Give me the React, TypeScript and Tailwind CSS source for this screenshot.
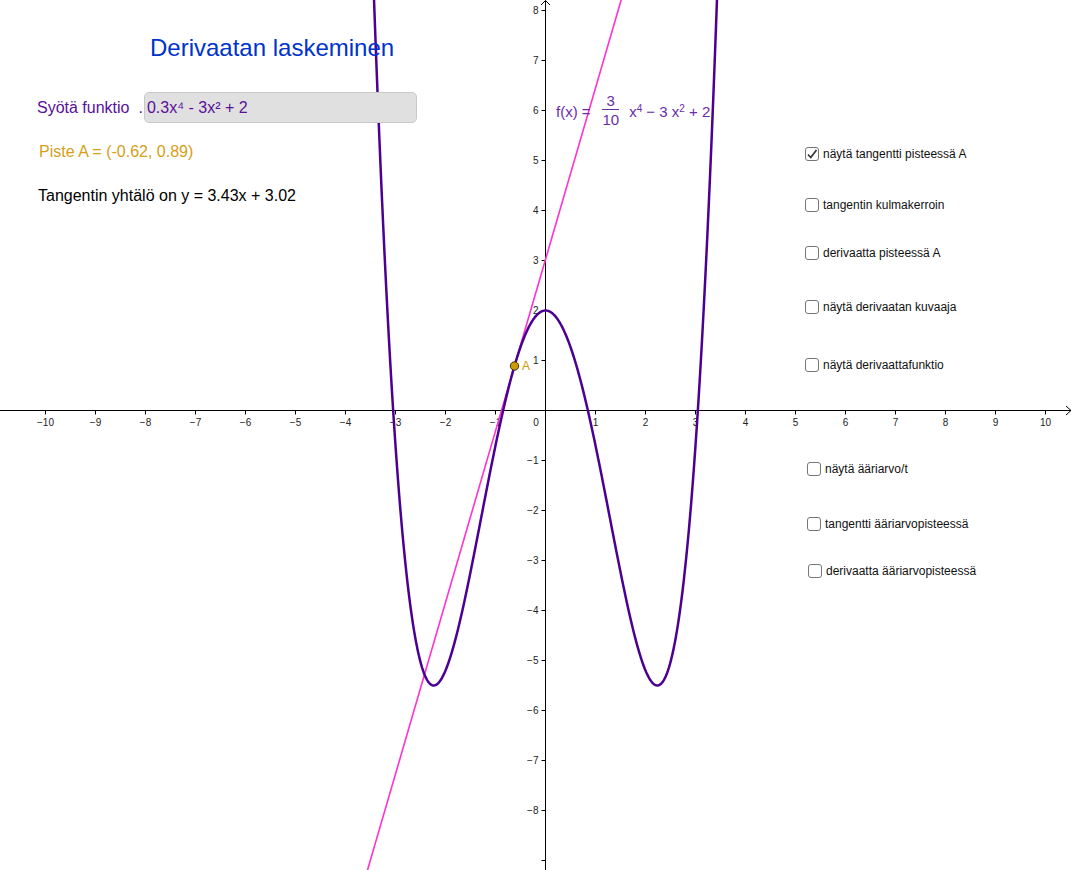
import React from "react";

// graph coordinates: origin in px, 50px per unit
const OX = 545.5;
const OY = 410.5;
const U = 50;

const f = (x: number) => 0.3 * x ** 4 - 3 * x ** 2 + 2;

const curvePoints = () => {
  const pts: string[] = [];
  for (let px = 360; px <= 732; px += 1) {
    const x = (px - OX) / U;
    const py = OY - f(x) * U;
    if (py < -40) continue;
    pts.push(`${px},${py.toFixed(2)}`);
  }
  return pts.join(" ");
};

const minus = (n: number) => (n < 0 ? `\u2212${-n}` : `${n}`);

const topChecks = [
  { label: "näytä tangentti pisteessä A", cls: "", checked: true },
  { label: "tangentin kulmakerroin", cls: "mt-[37px]" },
  { label: "derivaatta pisteessä A", cls: "mt-[34px]" },
  { label: "näytä derivaatan kuvaaja", cls: "mt-[40px]" },
  { label: "näytä derivaattafunktio", cls: "mt-[44px]" },
];

const bottomChecks = [
  { label: "näytä ääriarvo/t", cls: "" },
  { label: "tangentti ääriarvopisteessä", cls: "mt-[41px] ml-[0px]" },
  { label: "derivaatta ääriarvopisteessä", cls: "mt-[33px] ml-[1px]" },
];

const Graph: React.FC = () => {
  const xs = Array.from({ length: 21 }, (_, i) => i - 10).filter((k) => k !== 0);
  const ys = Array.from({ length: 18 }, (_, i) => i - 9).filter((k) => k !== 0);

  // tangent y = 3.43x + 3.02
  const tx = (yv: number) => OX + ((yv - 3.02) / 3.43) * U;
  const yTop = OY / U;
  const yBot = (OY - 870) / U;

  return (
    <svg className="absolute inset-0" width={1074} height={870} viewBox="0 0 1074 870">
      {/* axes */}
      <line x1={0} y1={OY} x2={1071} y2={OY} stroke="#000" strokeWidth={1} />
      <polyline points="1066,406 1071,410.5 1066,415" fill="none" stroke="#000" strokeWidth={1} />
      <line x1={OX} y1={0.5} x2={OX} y2={870} stroke="#000" strokeWidth={1} />
      <polyline points="541,5 545.5,0.5 550,5" fill="none" stroke="#000" strokeWidth={1} />

      {xs.map((k) => (
        <g key={`x${k}`}>
          <line x1={OX + k * U} y1={OY} x2={OX + k * U} y2={OY + 4} stroke="#000" strokeWidth={1} />
          <text
            x={OX + k * U}
            y={OY + 15}
            textAnchor="middle"
            fontSize={10}
            fontFamily="'Liberation Sans', Arial, sans-serif"
            fill="#222"
          >
            {minus(k)}
          </text>
        </g>
      ))}
      <text x={536} y={OY + 15} textAnchor="middle" fontSize={10} fontFamily="'Liberation Sans', Arial, sans-serif" fill="#222">
        0
      </text>
      {ys.map((k) => (
        <g key={`y${k}`}>
          <line x1={OX - 4} y1={OY - k * U} x2={OX} y2={OY - k * U} stroke="#000" strokeWidth={1} />
          {k !== -9 && (
            <text
              x={538.5}
              y={OY - k * U + 3.5}
              textAnchor="end"
              fontSize={10}
              fontFamily="'Liberation Sans', Arial, sans-serif"
              fill="#222"
            >
              {minus(k)}
            </text>
          )}
        </g>
      ))}

      {/* tangent line */}
      <line x1={tx(yTop)} y1={0} x2={tx(yBot)} y2={870} stroke="#ff33cc" strokeWidth={1.6} />

      {/* function curve */}
      <polyline points={curvePoints()} fill="none" stroke="#4b0092" strokeWidth={2.5} strokeLinejoin="round" />

      {/* point A */}
      <circle cx={OX - 0.62 * U} cy={OY - 0.89 * U} r={4.2} fill="#cc9a06" stroke="#3a3000" strokeWidth={1} />
    </svg>
  );
};

const CheckRow: React.FC<{ label: string; checked?: boolean; cls: string }> = ({ label, checked, cls }) => (
  <div className={`flex items-center gap-[4px] ${cls}`}>
    <span className="flex h-[14px] w-[14px] items-center justify-center rounded-[3px] border border-[#767676] bg-white">
      {checked && (
        <svg width="12" height="12" viewBox="0 0 12 12">
          <polyline points="2,6.5 4.8,9.5 10.5,2" fill="none" stroke="#333" strokeWidth={1.7} />
        </svg>
      )}
    </span>
    <span className="text-[12px] leading-none text-[#111]">{label}</span>
  </div>
);

export default function App() {
  return (
    <div className="relative h-[870px] w-[1074px] overflow-hidden bg-white font-['Liberation_Sans',Arial,sans-serif]">
      <Graph />

      {/* header + inputs */}
      <div className="absolute left-[37px] top-[35.5px] flex flex-col items-start">
        <h1 className="ml-[113px] text-[24px] leading-none font-normal text-[#0033cc]">Derivaatan laskeminen</h1>

        <div className="mt-[32.5px] flex items-center">
          <span className="text-[16px] leading-none text-[#5a0f9c]">Syötä funktio</span>
          <span className="ml-[9px] text-[16px] leading-none text-[#5a0f9c]">.</span>
          <div className="ml-[1px] flex h-[31px] w-[273px] items-center rounded-[5px] border border-[#c9c9c9] bg-[#e0e0e0] pl-[2px]">
            <span className="text-[16px] leading-none text-[#5a0f9c]">0.3x⁴ - 3x² + 2</span>
          </div>
        </div>

        <div className="ml-[2px] mt-[21px] text-[16px] leading-none text-[#d4a017]">Piste A = (-0.62, 0.89)</div>
        <div className="ml-[1px] mt-[28px] text-[16px] leading-none text-black">
          Tangentin yhtälö on y = 3.43x + 3.02
        </div>
      </div>

      {/* formula label on the graph */}
      <div className="absolute left-[556px] top-[94px] flex items-center text-[15px] leading-none text-[#6a2da8]">
        <span>f(x)</span>
        <span className="ml-[4px]">=</span>
        <span className="relative -top-[1px] ml-[12px] flex flex-col items-center">
          <span className="pb-[1px]">3</span>
          <span className="border-t border-[#6a2da8] pt-[2px]">10</span>
        </span>
        <span className="ml-[10px] whitespace-pre">
          x<sup className="text-[10px]">4</sup> − 3 x<sup className="text-[10px]">2</sup> + 2
        </span>
      </div>

      <div className="absolute left-[522px] top-[360px] text-[12px] leading-none text-[#cc9a06]">A</div>

      {/* checkbox panel */}
      <div className="absolute left-[805px] top-[147px] flex flex-col">
        {topChecks.map((c) => (
          <CheckRow key={c.label} {...c} />
        ))}
      </div>
      <div className="absolute left-[807px] top-[462px] flex flex-col">
        {bottomChecks.map((c) => (
          <CheckRow key={c.label} {...c} />
        ))}
      </div>
    </div>
  );
}
